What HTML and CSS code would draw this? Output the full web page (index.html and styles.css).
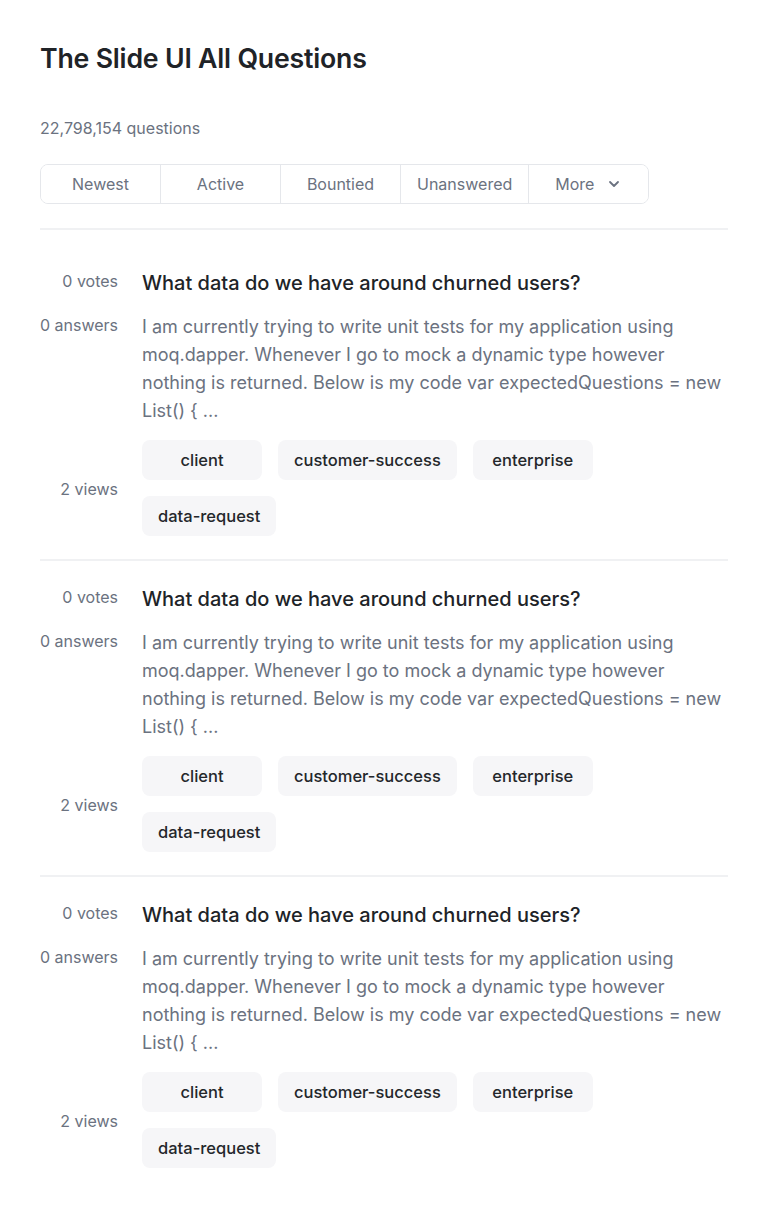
FILE: index.html
```html
<!DOCTYPE html>
<html lang="en">
<head>
<meta charset="utf-8">
<title>The Slide UI All Questions</title>
<link rel="stylesheet" href="styles.css">
</head>
<body>
<main class="page">
  <h1 class="title">The Slide UI All Questions</h1>
  <p class="count">22,798,154 questions</p>
  <nav class="tabs">
    <button class="tab">Newest</button>
    <button class="tab">Active</button>
    <button class="tab">Bountied</button>
    <button class="tab">Unanswered</button>
    <button class="tab tab-more">More
      <svg class="chev" width="16" height="16" viewBox="0 0 16 16" fill="none"><path d="M4 6l4 4 4-4" stroke="currentColor" stroke-width="1.8" stroke-linecap="round" stroke-linejoin="round"/></svg>
    </button>
  </nav>
  <div class="divider"></div>

  <section class="list">
    <article class="q">
      <div class="stats">
        <span class="stat">0 votes</span>
        <span class="stat">0 answers</span>
        <span class="stat views">2 views</span>
      </div>
      <div class="body">
        <h2 class="q-title">What data do we have around churned users?</h2>
        <p class="excerpt">I am currently trying to write unit tests for my application using moq.dapper. Whenever I go to mock a dynamic type however nothing is returned. Below is my code var expectedQuestions = new List() { ...</p>
        <div class="tags">
          <span class="tag">client</span>
          <span class="tag">customer-success</span>
          <span class="tag">enterprise</span>
          <span class="tag">data-request</span>
        </div>
      </div>
    </article>
    <article class="q">
      <div class="stats">
        <span class="stat">0 votes</span>
        <span class="stat">0 answers</span>
        <span class="stat views">2 views</span>
      </div>
      <div class="body">
        <h2 class="q-title">What data do we have around churned users?</h2>
        <p class="excerpt">I am currently trying to write unit tests for my application using moq.dapper. Whenever I go to mock a dynamic type however nothing is returned. Below is my code var expectedQuestions = new List() { ...</p>
        <div class="tags">
          <span class="tag">client</span>
          <span class="tag">customer-success</span>
          <span class="tag">enterprise</span>
          <span class="tag">data-request</span>
        </div>
      </div>
    </article>
    <article class="q last">
      <div class="stats">
        <span class="stat">0 votes</span>
        <span class="stat">0 answers</span>
        <span class="stat views">2 views</span>
      </div>
      <div class="body">
        <h2 class="q-title">What data do we have around churned users?</h2>
        <p class="excerpt">I am currently trying to write unit tests for my application using moq.dapper. Whenever I go to mock a dynamic type however nothing is returned. Below is my code var expectedQuestions = new List() { ...</p>
        <div class="tags">
          <span class="tag">client</span>
          <span class="tag">customer-success</span>
          <span class="tag">enterprise</span>
          <span class="tag">data-request</span>
        </div>
      </div>
    </article>
  </section>
</main>
</body>
</html>
```

FILE: styles.css
```css
* { box-sizing: border-box; }
html, body { margin: 0; padding: 0; background: #ffffff; }
body {
  font-family: Inter, "Noto Sans", "Liberation Sans", sans-serif;
  color: #1f2328;
}
.page {
  padding: 32px 40px 0;
}
.title {
  margin: 0;
  font-size: 26.7px;
  line-height: 52px;
  font-weight: 600;
  color: #202327;
  letter-spacing: -0.2px;
}
.count {
  margin: 34px 0 0;
  font-size: 16px;
  line-height: 20px;
  color: #6b7280;
}
.tabs {
  margin-top: 26px;
  display: inline-flex;
  border: 1px solid #e5e7eb;
  border-radius: 8px;
  height: 40px;
  overflow: hidden;
}
.tab {
  font-family: inherit;
  background: #fff;
  border: 0;
  border-left: 1px solid #e5e7eb;
  min-width: 120px;
  padding: 0 16px;
  font-size: 16px;
  color: #6b7280;
  display: flex;
  align-items: center;
  justify-content: center;
  gap: 12px;
}
.tab:first-child { border-left: 0; min-width: 119px; }
.chev { color: #6b7280; }
.divider {
  margin-top: 24px;
  margin-bottom: 15px;
  height: 2px;
  background: #f0f1f3;
}
.q {
  display: flex;
  gap: 24px;
  padding: 24px 0 23px;
  border-bottom: 2px solid #f0f1f3;
}
.q.last { border-bottom: 0; }
.stats {
  width: 78px;
  flex-shrink: 0;
  display: flex;
  flex-direction: column;
  align-items: flex-end;
  gap: 20px;
}
.stat {
  font-size: 16px;
  line-height: 24px;
  color: #6b7280;
  white-space: nowrap;
}
.stat.views { margin-top: 120px; }
.body { flex: 1; min-width: 0; }
.q-title {
  margin: 0;
  font-size: 20px;
  line-height: 28px;
  font-weight: 500;
  color: #202327;
}
.excerpt {
  margin: 16px 0 0;
  font-size: 18px;
  line-height: 28px;
  color: #6b7280;
}
.tags {
  margin-top: 15px;
  display: flex;
  flex-wrap: wrap;
  gap: 16px;
}
.tag {
  min-width: 120px;
  height: 40px;
  padding: 0 16px;
  border-radius: 8px;
  background: #f6f6f8;
  display: flex;
  align-items: center;
  justify-content: center;
  font-size: 16.5px;
  font-weight: 500;
  color: #24272b;
}
```
